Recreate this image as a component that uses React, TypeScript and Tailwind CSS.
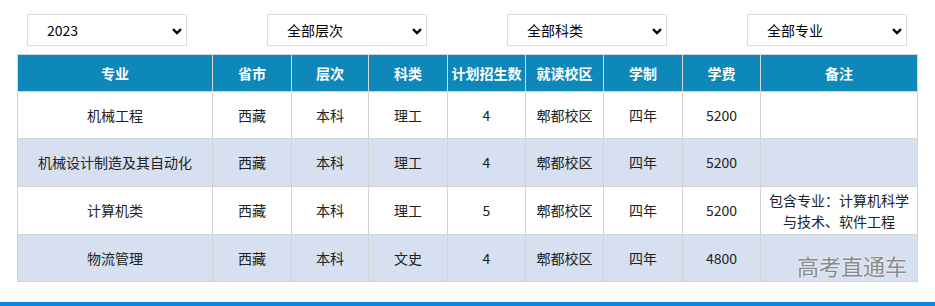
import React from "react";

const font = { fontFamily: '"Microsoft YaHei", "Noto Sans CJK SC", "Noto Sans", sans-serif' };

function Select({ label }: { label: string }) {
  return (
    <div className="relative w-[160px] h-[32px] border border-[#dcdcdc] bg-white flex items-center pl-[19px] text-[14px] text-black">
      <span>{label}</span>
      <svg className="absolute right-[4px] top-[13px]" width="10" height="7" viewBox="0 0 10 7">
        <path d="M1 1.2 L5 5 L9 1.2" fill="none" stroke="#000" strokeWidth="2.4" />
      </svg>
    </div>
  );
}

const cols = [195, 79, 77, 79, 78, 78, 79, 78, 157];
const headers = ["专业", "省市", "层次", "科类", "计划招生数", "就读校区", "学制", "学费", "备注"];
const rows = [
  ["机械工程", "西藏", "本科", "理工", "4", "郫都校区", "四年", "5200", ""],
  ["机械设计制造及其自动化", "西藏", "本科", "理工", "4", "郫都校区", "四年", "5200", ""],
  ["计算机类", "西藏", "本科", "理工", "5", "郫都校区", "四年", "5200", "包含专业：计算机科学与技术、软件工程"],
  ["物流管理", "西藏", "本科", "文史", "4", "郫都校区", "四年", "4800", ""],
];
const heights = [47, 48, 48, 47];

export default function App() {
  return (
    <div className="w-[935px] h-[306px] bg-white relative overflow-hidden" style={font}>
      <div className="pl-[17px] pt-[14px]">
        <div className="flex gap-[80px] pl-[10px]">
          <Select label="2023" />
          <Select label="全部层次" />
          <Select label="全部科类" />
          <Select label="全部专业" />
        </div>
        <div className="relative mt-[8px] w-[900px]">
          <table className="border-collapse table-fixed w-[900px] text-[14px] text-[#222]">
            <colgroup>
              {cols.map((w, i) => (
                <col key={i} style={{ width: w }} />
              ))}
            </colgroup>
            <thead>
              <tr className="h-[37px] bg-[#0e88b9]">
                {headers.map((h, i) => (
                  <th key={i} className="border border-[#d6d6d6] border-b-0 text-white font-bold text-center p-0 whitespace-nowrap">
                    {h}
                  </th>
                ))}
              </tr>
            </thead>
            <tbody>
              {rows.map((r, ri) => (
                <tr key={ri} className={ri % 2 === 1 ? "bg-[#d7e0f0]" : "bg-white"} style={{ height: heights[ri] }}>
                  {r.map((c, ci) => (
                    <td key={ci} className={"border border-[#d3d3d3] text-center align-middle p-0 " + (ci === 8 ? "px-[6px] leading-[21px]" : "")}>
                      {c}
                    </td>
                  ))}
                </tr>
              ))}
            </tbody>
          </table>
          <div className="absolute right-[10px] bottom-[5px] text-[22px] leading-[24px] text-[#8a8a8a] [text-shadow:0_0_2px_#fff]">
            高考直通车
          </div>
        </div>
      </div>
      <div className="absolute left-0 right-0 bottom-0 h-[4px] bg-[#0a8ae0]" />
    </div>
  );
}
